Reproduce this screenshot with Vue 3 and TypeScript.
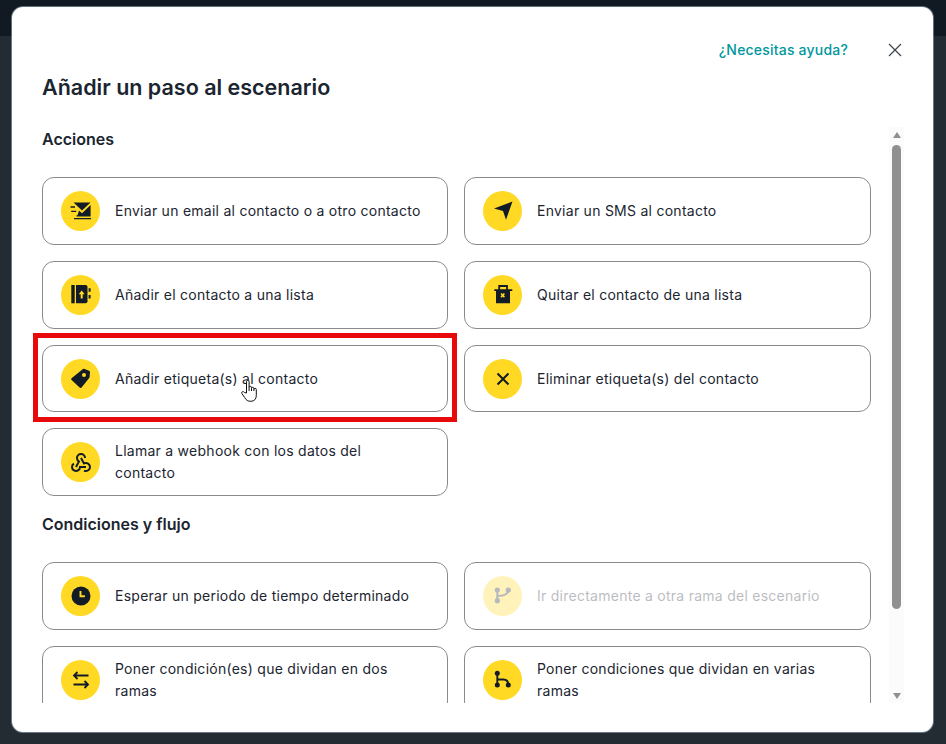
<script setup lang="ts">
interface Step {
  text: string
  icon: string
  disabled?: boolean
  marked?: boolean
}

const actions: Step[] = [
  { text: 'Enviar un email al contacto o a otro contacto', icon: 'mail' },
  { text: 'Enviar un SMS al contacto', icon: 'send' },
  { text: 'Añadir el contacto a una lista', icon: 'book' },
  { text: 'Quitar el contacto de una lista', icon: 'trash' },
  { text: 'Añadir etiqueta(s) al contacto', icon: 'tag', marked: true },
  { text: 'Eliminar etiqueta(s) del contacto', icon: 'x' },
  { text: 'Llamar a webhook con los datos del contacto', icon: 'hook' },
]

const flow: Step[] = [
  { text: 'Esperar un periodo de tiempo determinado', icon: 'clock' },
  { text: 'Ir directamente a otra rama del escenario', icon: 'goto', disabled: true },
  { text: 'Poner condición(es) que dividan en dos ramas', icon: 'swap' },
  { text: 'Poner condiciones que dividan en varias ramas', icon: 'split' },
]

const sections = [
  { title: 'Acciones', steps: actions },
  { title: 'Condiciones y flujo', steps: flow },
]
</script>

<template>
  <div class="page">
    <div class="modal">
      <div class="top">
        <a class="help">¿Necesitas ayuda?</a>
        <svg class="close" width="16" height="16" viewBox="0 0 16 16">
          <path d="M2 2l12 12M14 2L2 14" />
        </svg>
      </div>
      <h1 class="title">Añadir un paso al escenario</h1>
      <div class="body">
        <div class="content">
          <section v-for="s in sections" :key="s.title" class="section">
            <h2 class="heading">{{ s.title }}</h2>
            <div class="grid">
              <div v-for="st in s.steps" :key="st.text" class="card" :class="{ off: st.disabled }">
                <span class="badge">
                  <svg width="24" height="24" viewBox="0 0 24 24" class="ico">
                    <g v-if="st.icon === 'mail'">
                      <path d="M4.5 3.5h17L13 11.5z" />
                      <path d="M21.6 6v11.6H7.5v-1.4h1L10 11.6l3 2.6z" />
                      <path class="ln" d="M1.5 8h4.5M2.2 12.3h5M5 19.6h17" stroke-width="1.3" />
                    </g>
                    <g v-else-if="st.icon === 'send'">
                      <path d="M3 9.5L21.5 2.5 15 20.7 12 12z" />
                    </g>
                    <g v-else-if="st.icon === 'book'">
                      <path d="M2.3 2h3.4v18.3H2.3z" />
                      <path d="M7 2h9.5a2 2 0 0 1 2 2v14.3a2 2 0 0 1-2 2H7z" />
                      <path d="M19.6 5.3h2v3.4h-2zM19.6 12h2v3.4h-2z" />
                      <path class="y" d="M12.7 7.6l3 3.6h-2v4.4h-2v-4.4h-2z" />
                    </g>
                    <g v-else-if="st.icon === 'trash'">
                      <path class="ln" d="M8.2 7V3h7.8v4" stroke-width="1.8" />
                      <path d="M3.3 6.2h18v1.8h-18zM5 8h14v12.3H5z" />
                      <path class="ln yl" d="M10 10.5l3.4 3.6M13.4 10.5L10 14.1" stroke-width="1.6" />
                    </g>
                    <g v-else-if="st.icon === 'tag'">
                      <path d="M2.5 11.2L14 2a1.5 1.5 0 0 1 1-.2L20 3.8a1.5 1.5 0 0 1 1 1.2l-.4 5a1.5 1.5 0 0 1-.4 1L12.6 20.4a1.5 1.5 0 0 1-2 .1L2.6 13a1.3 1.3 0 0 1-.1-1.8z" />
                      <circle class="y" cx="15" cy="8" r="2" />
                    </g>
                    <g v-else-if="st.icon === 'x'">
                      <path class="ln" d="M6.5 6.5l11 11M17.5 6.5l-11 11" stroke-width="2" />
                    </g>
                    <g v-else-if="st.icon === 'hook'">
                      <path class="ln" stroke-width="2" d="M4.876 13.61a4 4 0 1 0 6.124 3.39h6" />
                      <path class="ln" stroke-width="2" d="M15.066 20.502a4 4 0 1 0 1.934-7.502c-.706 0-1.424.179-2 .5l-3-5.5" />
                      <path class="ln" stroke-width="2" d="M16 8a4 4 0 1 0-8 0c0 1.506.77 2.818 2 3.5l-3 5.5" />
                    </g>
                    <g v-else-if="st.icon === 'clock'">
                      <circle cx="12" cy="12" r="9.5" />
                      <path class="ln yl" d="M11.5 7v5.2h4.4" stroke-width="1.9" />
                    </g>
                    <g v-else-if="st.icon === 'goto'">
                      <circle cx="6.3" cy="6" r="2.6" />
                      <circle cx="17.3" cy="6" r="2.6" />
                      <circle cx="6.3" cy="16.7" r="2.6" />
                      <path class="ln" d="M6.3 6v11M17.3 6c0 4.5-4 6-11 6" stroke-width="2" />
                    </g>
                    <g v-else-if="st.icon === 'swap'">
                      <path class="ln" d="M19.5 7.5H5M8.5 4L5 7.5 8.5 11M4.5 16.5H19M15.5 13l3.5 3.5-3.5 3.5" stroke-width="1.8" />
                    </g>
                    <g v-else-if="st.icon === 'split'">
                      <circle cx="6.3" cy="5.3" r="2.5" />
                      <circle cx="6.3" cy="17" r="2.5" />
                      <circle cx="17.3" cy="17" r="2.5" />
                      <path class="ln" d="M6.3 5v12M6.3 11.5h6c3 0 5 2 5 5.5" stroke-width="1.9" />
                    </g>
                  </svg>
                </span>
                <span class="label">{{ st.text }}</span>
                <template v-if="st.marked">
                  <span class="mark"></span>
                  <svg class="pointer" width="18" height="24" viewBox="0 0 18 24">
                    <path class="hand" d="M5.5 14V2.6a1.3 1.3 0 0 1 2.6 0V8.5a1.2 1.2 0 0 1 2.4 0v1a1.2 1.2 0 0 1 2.4 0v1a1.2 1.2 0 0 1 2.4 0v6c0 3.5-2 5.8-5.5 5.8-3 0-4.5-1-6-3.6L1 14.8c-.6-1-.2-1.8.5-2.1.7-.3 1.5 0 2 .8z" />
                    <path class="hand-line" d="M8.1 8.5V12M10.5 9.5V12M12.9 10.5V12" />
                  </svg>
                </template>
              </div>
            </div>
          </section>
        </div>
        <div class="bar">
          <span class="arrow up"></span>
          <span class="thumb"></span>
          <span class="arrow down"></span>
        </div>
      </div>
    </div>
  </div>
</template>

<style>
html,
body {
  margin: 0;
  background: #232b33;
}
</style>

<style scoped>
.page {
  box-sizing: border-box;
  width: 946px;
  height: 744px;
  padding: 7px 13px 12px 12px;
  overflow: hidden;
  background: linear-gradient(#111a22 36px, #232b33 36px);
  font-family: Inter, "Liberation Sans", sans-serif;
  color: #1b2530;
}
.modal {
  box-sizing: border-box;
  height: 725px;
  padding: 33px 29px 29px 30px;
  display: flex;
  flex-direction: column;
  background: #fff;
  border-radius: 11px;
  box-shadow: 0 0 0 1px rgba(190, 215, 235, 0.45);
}
.top {
  height: 20px;
  display: flex;
  align-items: center;
  justify-content: flex-end;
  gap: 39px;
  padding-right: 1px;
}
.help {
  font-size: 14px;
  font-weight: 500;
  line-height: 20px;
  letter-spacing: 0.2px;
  color: #00979d;
}
.close {
  fill: none;
  stroke: #3c434a;
  stroke-width: 1.2;
}
.title {
  margin: 12px 0 25px;
  font-size: 21.5px;
  font-weight: 600;
  line-height: 30px;
}
.body {
  flex: 1;
  min-height: 0;
  display: flex;
  gap: 18px;
}
.content {
  box-sizing: border-box;
  width: 839px;
  margin-left: -10px;
  padding-left: 10px;
  overflow: hidden;
}
.heading {
  margin: 0 0 26px;
  font-size: 16px;
  font-weight: 600;
  line-height: 24px;
}
.section + .section {
  margin-top: 15.8px;
}
.grid {
  display: grid;
  grid-template-columns: 406px 407px;
  gap: 16px;
  align-items: start;
}
.card {
  position: relative;
  box-sizing: border-box;
  min-height: 67.8px;
  padding: 0.4px 24px 0 18px;
  display: flex;
  align-items: center;
  gap: 14.8px;
  border: 1px solid #8a8a8a;
  border-radius: 12px;
  background: #fff;
}
.badge {
  flex: none;
  width: 39.2px;
  height: 40px;
  display: flex;
  align-items: center;
  justify-content: center;
  border-radius: 50%;
  background: #ffd923;
}
.ico {
  fill: #131c26;
}
.ln {
  fill: none;
  stroke: #131c26;
}
.yl {
  stroke: #ffd923;
}
.y {
  fill: #ffd923;
}
.label {
  font-size: 14px;
  font-weight: 430;
  line-height: 22px;
  letter-spacing: 0.26px;
}
.off .badge,
.off .label {
  opacity: 0.3;
}
.mark {
  position: absolute;
  left: -10px;
  right: -10px;
  top: -13px;
  bottom: -11px;
  border: 5px solid #e80a0a;
  pointer-events: none;
}
.pointer {
  position: absolute;
  left: 198px;
  top: 33px;
}
.hand {
  fill: #fff;
  stroke: #111;
  stroke-width: 1;
}
.hand-line {
  fill: none;
  stroke: #111;
  stroke-width: 1;
}
.bar {
  width: 15px;
  display: flex;
  flex-direction: column;
  align-items: center;
  background: #fbfbfb;
}
.arrow {
  width: 0;
  height: 0;
  border-left: 4.5px solid transparent;
  border-right: 4.5px solid transparent;
}
.up {
  margin-top: 5px;
  border-bottom: 6.5px solid #8f8f8f;
}
.thumb {
  width: 9px;
  height: 464px;
  margin-top: 6.5px;
  border-radius: 5px;
  background: #909090;
}
.down {
  margin-top: auto;
  margin-bottom: 4px;
  border-top: 6.5px solid #8f8f8f;
}
</style>
